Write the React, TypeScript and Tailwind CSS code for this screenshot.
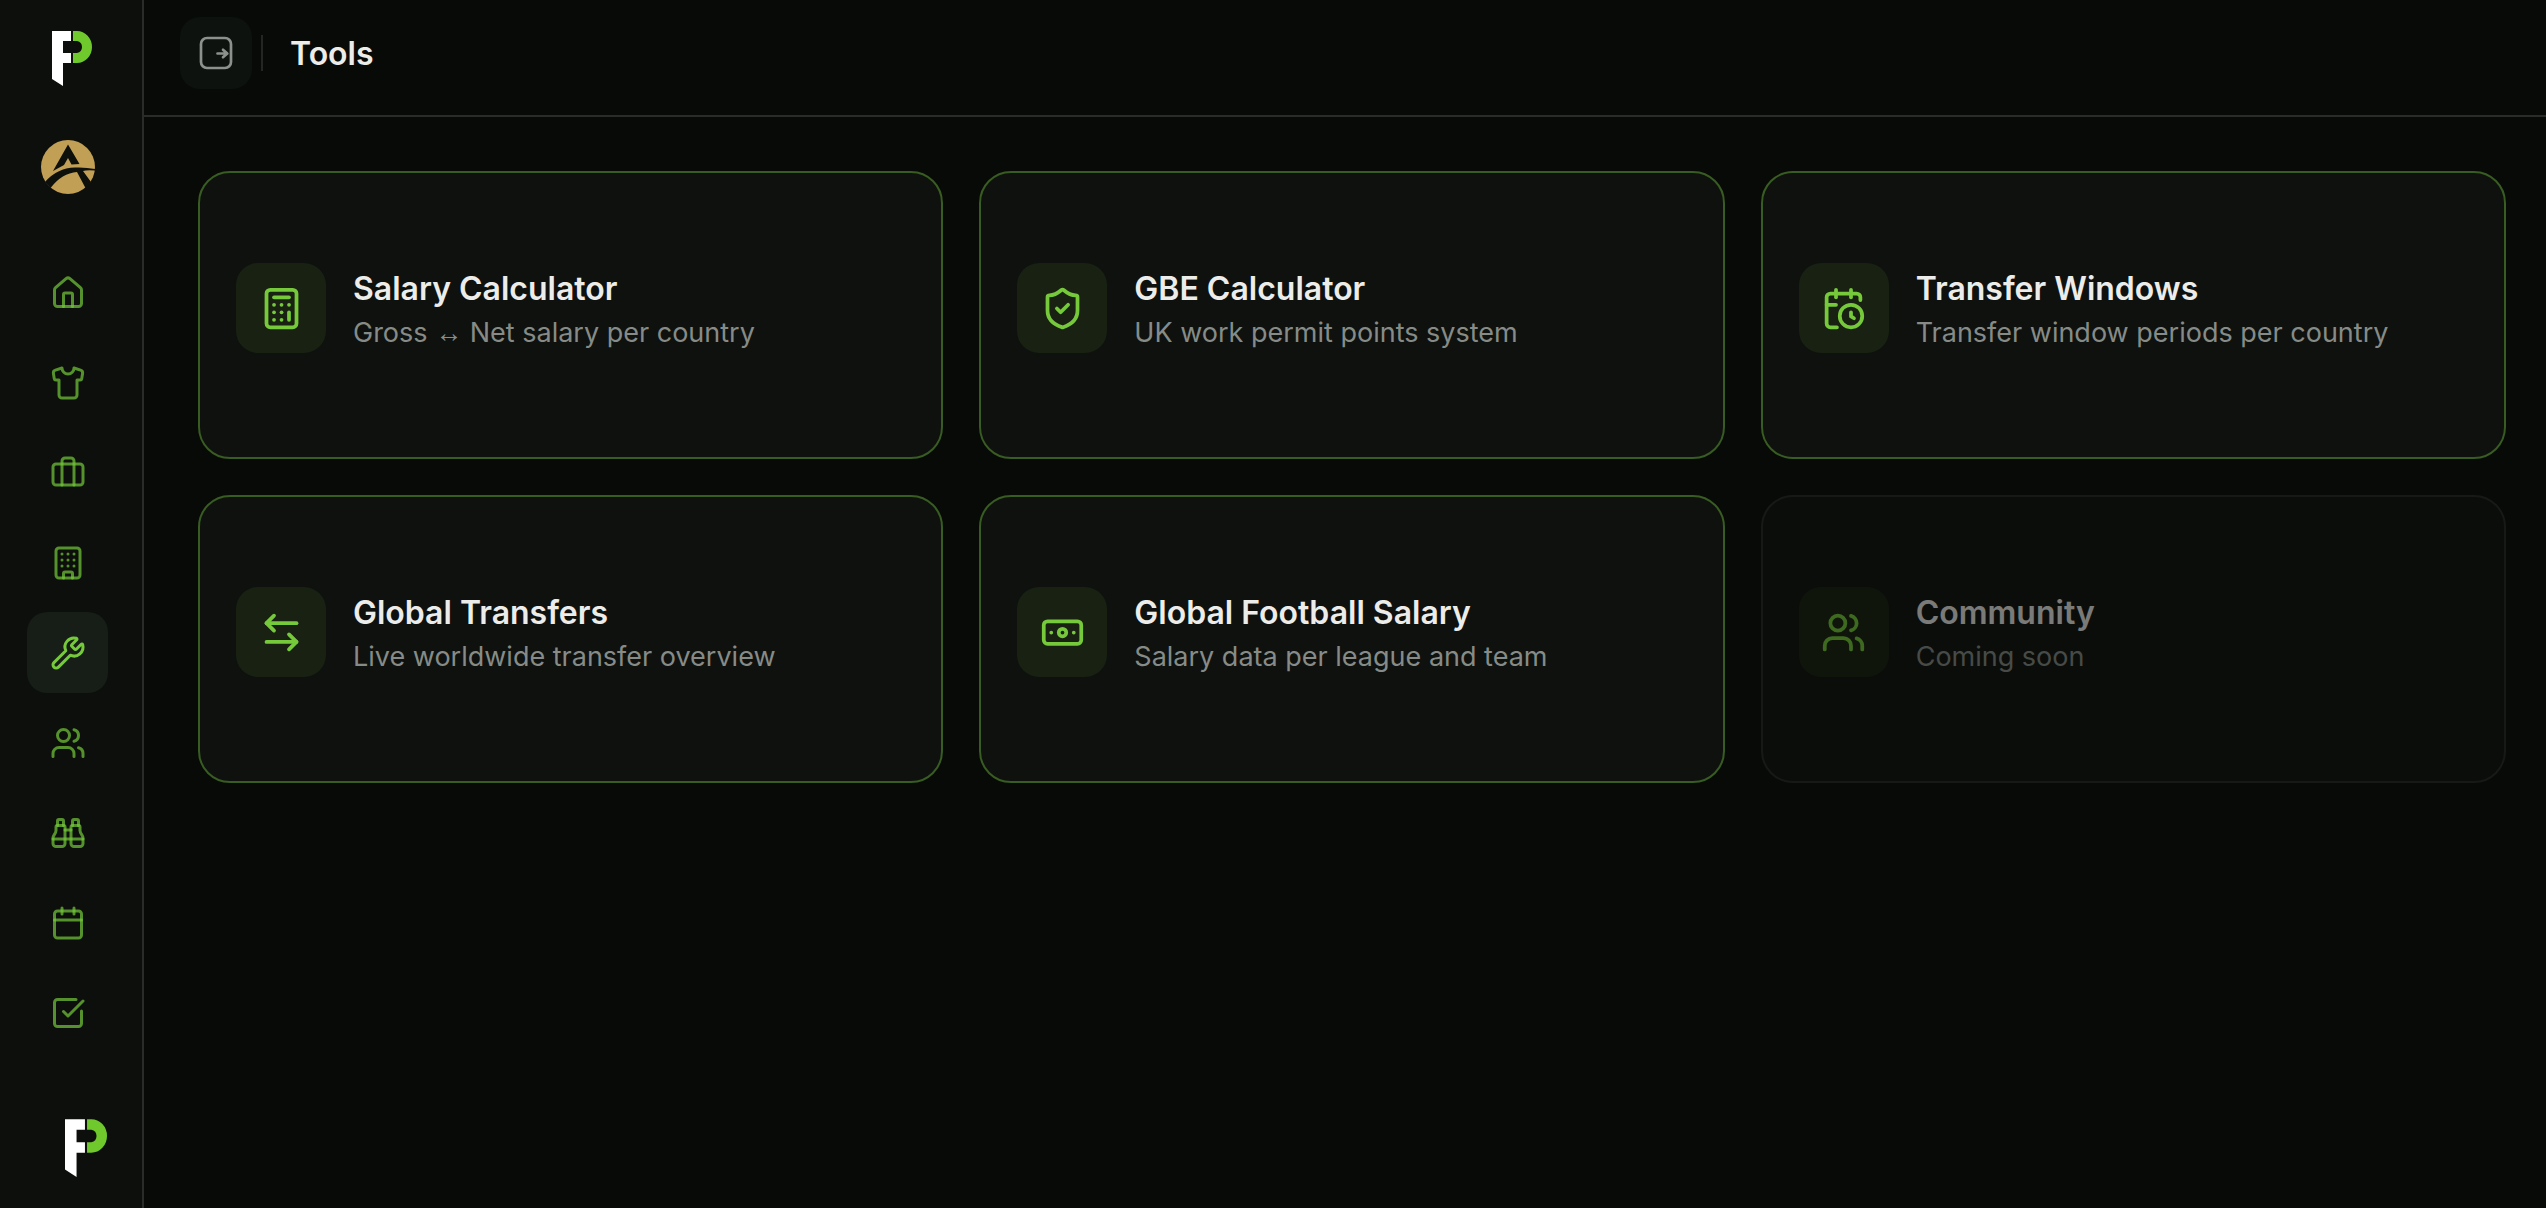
import React from 'react';
import {
    ArrowLeftRight,
    Banknote,
    Binoculars,
    Briefcase,
    Building,
    Calculator,
    Calendar,
    CalendarClock,
    House,
    LucideIcon,
    ShieldCheck,
    Shirt,
    SquareCheckBig,
    Users,
    Wrench,
} from 'lucide-react';

interface NavItem {
    label: string;
    icon: LucideIcon;
    active?: boolean;
}

interface Tool {
    title: string;
    description: React.ReactNode;
    icon: LucideIcon;
    disabled?: boolean;
}

const NAV_ITEMS: NavItem[] = [
    { label: 'Home', icon: House },
    { label: 'Players', icon: Shirt },
    { label: 'Business', icon: Briefcase },
    { label: 'Clubs', icon: Building },
    { label: 'Tools', icon: Wrench, active: true },
    { label: 'Contacts', icon: Users },
    { label: 'Scouting', icon: Binoculars },
    { label: 'Calendar', icon: Calendar },
    { label: 'Tasks', icon: SquareCheckBig },
];

const TOOLS: Tool[] = [
    {
        title: 'Salary Calculator',
        description: <>Gross <span className="font-['Liberation_Sans',sans-serif]">↔</span> Net salary per country</>,
        icon: Calculator,
    },
    { title: 'GBE Calculator', description: 'UK work permit points system', icon: ShieldCheck },
    { title: 'Transfer Windows', description: 'Transfer window periods per country', icon: CalendarClock },
    { title: 'Global Transfers', description: 'Live worldwide transfer overview', icon: ArrowLeftRight },
    { title: 'Global Football Salary', description: 'Salary data per league and team', icon: Banknote },
    { title: 'Community', description: 'Coming soon', icon: Users, disabled: true },
];

const BrandMark: React.FC<{ className?: string }> = ({ className }) => (
    <svg viewBox="0 0 40 55" className={className} aria-hidden="true">
        <path fill="#ffffff" d="M0 0h19v10h-8v12h8v10h-8v23L0 48z" />
        <path fill="#6fc92c" d="M21 0h4a15 16 0 0 1 0 32h-4V22h4q5-1 5-6t-5-6h-4z" />
    </svg>
);

const TeamBadge: React.FC<{ className?: string }> = ({ className }) => (
    <svg viewBox="0 0 54 54" className={className} aria-hidden="true">
        <circle cx="27" cy="27" r="27" fill="#c19f55" />
        <g fill="#0d100b">
            <path d="M27 4.500 38.500 24l-8 .500L27 18l-4 7-11 6z" />
            <path d="M4 42Q16 28 34 27.500q10-.500 20 1.500v1.500q-9-.500-12 .500l8 11-5 7-9-17Q21 33 9.500 48z" />
        </g>
    </svg>
);

const PanelIcon: React.FC<{ className?: string }> = ({ className }) => (
    <svg viewBox="0 0 36 36" fill="none" stroke="currentColor" strokeWidth="2.700" strokeLinecap="round" strokeLinejoin="round" className={className} aria-hidden="true">
        <rect x="3" y="3" width="30" height="30" rx="6" />
        <path d="M19.500 18.500h9M25 14.800l4.300 3.700-4.300 3.700" />
    </svg>
);

const Sidebar: React.FC = () => (
    <aside className="flex shrink-0 flex-col justify-between border-r-2 border-[#2a2c2a] bg-[#0c0f0b] pt-[31px] pr-[34px] pb-[31px] pl-[27px]">
        <div className="flex flex-col items-center">
            <a href="#home" aria-label="Home" className="pl-2">
                <BrandMark className="h-[55px] w-10" />
            </a>
            <button type="button" aria-label="Switch team" className="mt-[54px]">
                <TeamBadge className="size-[54px]" />
            </button>
            <nav className="mt-[58px] flex flex-col gap-[9px]">
                {NAV_ITEMS.map(({ label, icon: Icon, active }) => (
                    <a
                        key={label}
                        href={`#${label.toLowerCase()}`}
                        aria-label={label}
                        className={`flex size-[81px] items-center justify-center rounded-[20px] ${active ? 'bg-[#171d17] text-[#75c93a]' : 'text-[#75c93a]/70'}`}
                    >
                        <Icon className="size-9" strokeWidth={2} />
                    </a>
                ))}
            </nav>
        </div>
        <BrandMark className="ml-[38px] h-[58px] w-[42px]" />
    </aside>
);

const Header: React.FC = () => (
    <header className="flex items-center border-b-2 border-[#2a2c2a] pt-[17px] pb-[26px] pl-9">
        <button type="button" aria-label="Toggle sidebar" className="flex size-[72px] items-center justify-center rounded-[20px] bg-[#0d120f] text-[#8d918d]">
            <PanelIcon className="size-9" />
        </button>
        <div className="mx-[9px] h-9 w-0.5 bg-[#232623]" />
        <h1 className="ml-[18px] pt-0.5 text-[32px] leading-9 font-semibold text-[#ececea]">Tools</h1>
    </header>
);

const ToolCard: React.FC<{ tool: Tool }> = ({ tool }) => {
    const Icon = tool.icon;
    return (
        <button
            type="button"
            disabled={tool.disabled}
            className={`flex h-72 items-start rounded-[32px] border-2 bg-[#0e110e] px-9 pt-[90px] text-left ${tool.disabled ? 'border-[#272927] opacity-50' : 'border-[#385c22]'}`}
        >
            <span className="flex size-[90px] shrink-0 items-center justify-center rounded-[22px] bg-[#182112] text-[#75c93a]">
                <Icon className="size-[45px]" strokeWidth={2} />
            </span>
            <span className="ml-[27px] flex flex-col gap-1 pt-1.5">
                <span className="text-[32px] leading-10 font-semibold text-[#ececea]">{tool.title}</span>
                <span className="text-[27px] leading-10 text-[#868b87]">{tool.description}</span>
            </span>
        </button>
    );
};

const App: React.FC = () => {
    return (
        <div className="flex min-h-screen bg-[#080a07] font-['Inter',sans-serif]">
            <Sidebar />
            <div className="flex min-w-0 flex-1 flex-col">
                <Header />
                <main className="grid grid-cols-3 gap-9 pt-[54px] pr-10 pl-[54px]">
                    {TOOLS.map((tool) => (
                        <ToolCard key={tool.title} tool={tool} />
                    ))}
                </main>
            </div>
        </div>
    );
};

export default App;
